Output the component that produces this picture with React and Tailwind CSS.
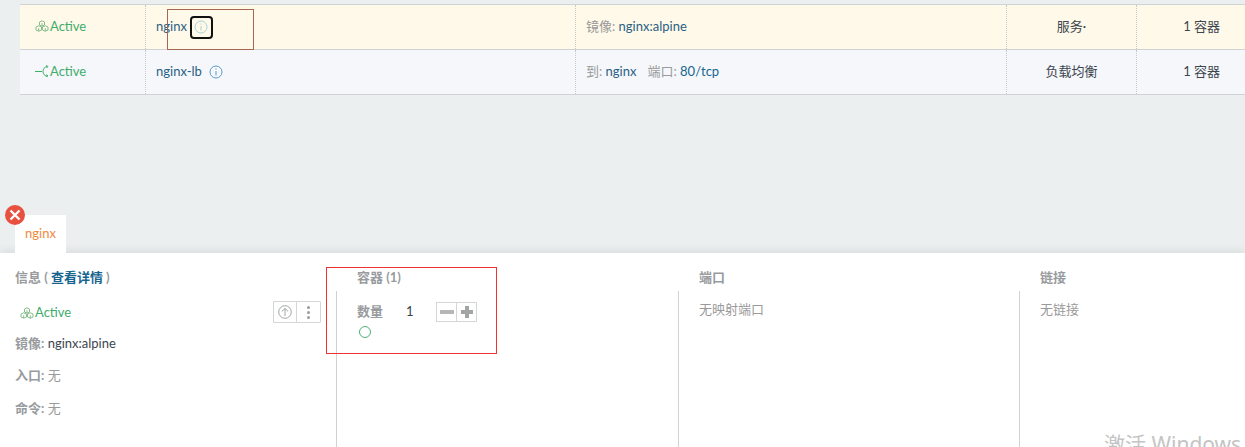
import React from "react";

function StackIcon({ className }) {
  return (
    <svg viewBox="0 0 14 12" className={className} fill="none" stroke="#86bd8c" strokeWidth="1">
      <path d="M4.5 2L7 .8 9.5 2v3L7 6.2 4.5 5z" />
      <path d="M1 7l2.7-1.2L6.5 7v3l-2.8 1.2L1 10z" />
      <path d="M7.5 7l2.8-1.2L13 7v3l-2.7 1.2L7.5 10z" />
      <path d="M7 3.2v3M3.7 8.2v3M10.3 8.2v3" />
    </svg>
  );
}

function BalancerIcon({ className }) {
  return (
    <svg viewBox="0 0 14 12" className={className} fill="none" stroke="#3fae6a" strokeWidth="1">
      <path d="M0 6.5h7" />
      <path d="M12 1.5C9.5 2 8 4 8 6.5S9.5 11 12 11" />
      <path d="M11 .5l2 1-1.5 1.5M11 12l2-1-1.5-1.5" />
    </svg>
  );
}

function InfoIcon({ color }) {
  return (
    <svg viewBox="0 0 14 14" className="w-[14px] h-[14px]" fill="none" stroke={color} strokeWidth="1">
      <circle cx="7" cy="7" r="6" />
      <path d="M7 6v4.5M7 3.5v1.2" />
    </svg>
  );
}

function Row({ bg, icon, name, infoColor, detail, kind }) {
  return (
    <div className={`flex h-[45px] border-b border-[#cfd3d4] ${bg}`}>
      <div className="w-[126px] border-r border-dotted border-[#c4c8ca] flex items-start pt-[12px] pl-[15px] gap-[1px] text-[#41ac6c]">
        {icon}
        <span className="leading-[18px]">Active</span>
      </div>
      <div className="w-[430px] border-r border-dotted border-[#c4c8ca] flex items-center pl-[10px] gap-[7px] text-[#2a5f85]">
        <span>{name}</span>
        <InfoIcon color={infoColor} />
      </div>
      <div className="w-[431px] border-r border-dotted border-[#c4c8ca] flex items-center pl-[10px] text-[#2a5f85]">
        {detail}
      </div>
      <div className="w-[130px] border-r border-dotted border-[#c4c8ca] flex items-center justify-center text-[#3d4650]">
        {kind}
      </div>
      <div className="flex-1 flex items-center justify-end pr-[25px] text-[#3d4650]">1 容器</div>
    </div>
  );
}

function Column({ title, width, children }) {
  return (
    <div className={`flex flex-col ${width}`}>
      <div className="h-[38px] pl-[21px] pt-[15px] leading-[18px] font-bold text-[#989b9e] whitespace-nowrap">{title}</div>
      <div className="flex-1 pl-[20px] pt-[9px] border-l border-[#cfd3d4]">{children}</div>
    </div>
  );
}

export default function App() {
  return (
    <div className="relative w-[1245px] h-[447px] overflow-hidden bg-[#ebeff0] flex flex-col text-[13px] font-['Lato','Noto_Sans_CJK_SC',sans-serif]">
      {/* service table */}
      <div className="ml-[20px] mt-[4px] border-t border-[#cfd3d4]">
        <Row
          bg="bg-[#fff9e9]"
          icon={<StackIcon className="w-[14px] h-[12px] mt-[3px]" />}
          name="nginx"
          infoColor="#a9d3dc"
          detail={
            <span>
              <span className="text-[#9a9a9a]">镜像:</span> nginx:alpine
            </span>
          }
          kind="服务·"
        />
        <Row
          bg="bg-[#f5f7fa]"
          icon={<BalancerIcon className="w-[14px] h-[12px] mt-[3px]" />}
          name="nginx-lb"
          infoColor="#5f9bc9"
          detail={
            <span>
              <span className="text-[#9a9a9a]">到:</span> nginx
              <span className="text-[#9a9a9a] ml-[11px]">端口:</span> <span className="text-[#17658f]">80/tcp</span>
            </span>
          }
          kind="负载均衡"
        />
      </div>

      <div className="flex-1" />

      {/* detail tab */}
      <div className="relative z-10 ml-[15px] w-[51px] h-[38px] bg-white flex items-center justify-center text-[#ee8a3c]">
        nginx
        <span className="absolute -left-[10px] -top-[10px] w-[20px] h-[20px] rounded-full bg-[#e8503f] flex items-center justify-center">
          <svg viewBox="0 0 12 12" className="w-[12px] h-[12px]" stroke="white" strokeWidth="2.4">
            <path d="M1.5 1.5l9 9M10.5 1.5l-9 9" />
          </svg>
        </span>
      </div>

      {/* detail panel */}
      <div className="relative h-[194px] bg-white flex shadow-[0_-3px_8px_rgba(0,0,0,0.07)]">
        <div className="w-[336px] flex flex-col">
          <div className="h-[38px] pl-[15px] pt-[15px] leading-[18px] font-bold text-[#989b9e]">
            信息 ( <span className="text-[#17658f]">查看详情</span> )
          </div>
          <div className="pl-[15px] pr-[15px]">
            <div className="flex items-center justify-between h-[22px] mt-[10px] pl-[5px]">
              <div className="flex items-center gap-[1px] text-[#41ac6c] pt-[1px]">
                <StackIcon className="w-[14px] h-[12px]" />
                <span>Active</span>
              </div>
              <div className="flex h-[22px] border border-[#d4d6d8] rounded-[1px]">
                <div className="w-[23px] border-r border-[#d4d6d8] flex items-center justify-center">
                  <svg viewBox="0 0 14 14" className="w-[14px] h-[14px]" fill="none" stroke="#a3a5a7" strokeWidth="1">
                    <circle cx="7" cy="7" r="6.3" />
                    <path d="M7 11V3.5M3.8 6.5L7 3.5l3.2 3" />
                  </svg>
                </div>
                <div className="w-[23px] flex flex-col items-center justify-center gap-[2px]">
                  <span className="w-[3px] h-[3px] rounded-full bg-[#9a9c9e]" />
                  <span className="w-[3px] h-[3px] rounded-full bg-[#9a9c9e]" />
                  <span className="w-[3px] h-[3px] rounded-full bg-[#9a9c9e]" />
                </div>
              </div>
            </div>
            <div className="mt-[11px] h-[18px] leading-[18px] text-[#3d4650]">
              <span className="font-bold text-[#989b9e]">镜像:</span> nginx:alpine
            </div>
            <div className="mt-[14px] h-[18px] leading-[18px] text-[#9a9a9a]">
              <span className="font-bold text-[#989b9e]">入口:</span> 无
            </div>
            <div className="mt-[15px] h-[18px] leading-[18px] text-[#9a9a9a]">
              <span className="font-bold text-[#989b9e]">命令:</span> 无
            </div>
          </div>
        </div>

        <Column title="容器 (1)" width="w-[342px]">
          <div className="flex items-center h-[22px] mt-[1px]">
            <span className="font-bold text-[#989b9e] w-[49px]">数量</span>
            <span className="text-[#33414e] w-[30px]">1</span>
            <div className="flex h-[20px] border border-[#d4d6d8]">
              <div className="w-[20px] border-r border-[#d4d6d8] flex items-center justify-center">
                <span className="w-[14px] h-[4px] bg-[#b5b7b9]" />
              </div>
              <div className="w-[19px] flex items-center justify-center">
                <svg viewBox="0 0 14 14" className="w-[14px] h-[14px]" fill="#a2a4a6">
                  <path d="M5 1h4v4h4v4H9v4H5V9H1V5h4z" />
                </svg>
              </div>
            </div>
          </div>
          <div className="mt-[3px] w-[12px] h-[12px] ml-[2px] rounded-full border border-[#4fb27a]" />
        </Column>

        <Column title="端口" width="w-[341px]">
          <div className="h-[18px] leading-[18px] text-[#9a9a9a]">无映射端口</div>
        </Column>

        <Column title="链接" width="flex-1">
          <div className="h-[18px] leading-[18px] text-[#9a9a9a]">无链接</div>
        </Column>
      </div>

      {/* annotation boxes drawn over the screenshot */}
      <div className="absolute left-[167px] top-[9px] w-[87px] h-[41px] border border-[#a5674f] pointer-events-none" />
      <div className="absolute left-[190px] top-[16px] w-[23px] h-[23px] border-2 border-[#111] rounded-[4px] pointer-events-none" />
      <div className="absolute left-[326px] top-[267px] w-[171px] h-[87px] border border-[#ee3333] pointer-events-none" />

      {/* windows activation watermark */}
      <div className="absolute left-[1104px] top-[432px] text-[21px] leading-[24px] text-[#c4c4c4] whitespace-nowrap font-['Noto_Sans','Noto_Sans_CJK_SC',sans-serif]">
        激活 Windows
      </div>
    </div>
  );
}
